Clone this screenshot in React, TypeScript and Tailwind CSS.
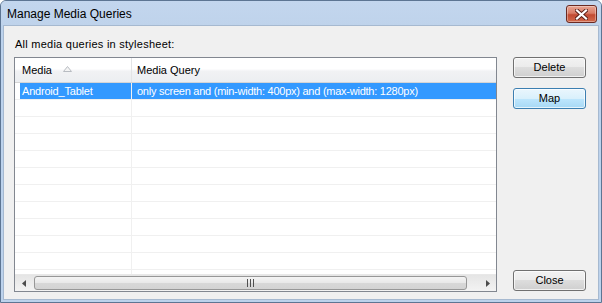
import { ReactNode } from "react";

const font = { fontFamily: '"Liberation Sans", Arial, sans-serif' };

function WinButton({ children, focused }: { children: ReactNode; focused?: boolean }) {
	const face = focused
		? "border-[#3c7fb1] bg-[linear-gradient(#eaf6fd_0%,#d9f0fc_50%,#bee6fd_50%,#a7d9f5_100%)]"
		: "border-[#707070] bg-[linear-gradient(#f2f2f2_0%,#ebebeb_50%,#dddddd_50%,#cfcfcf_100%)]";
	return (
		<div
			className={`h-[21px] w-[73px] rounded-[3px] border ${face} flex items-center justify-center text-[11px] text-black shadow-[inset_0_0_0_1px_rgba(255,255,255,0.7)]`}
		>
			{children}
		</div>
	);
}

function CloseX() {
	return (
		<div className="mt-[4px] h-[18px] w-[31px] rounded-[3px] border border-[#6b2a22] bg-[linear-gradient(#e8a493_0%,#d97c66_45%,#c24a32_55%,#d26a4c_100%)] flex items-center justify-center shadow-[inset_0_0_0_1px_rgba(255,255,255,0.35)]">
			<svg width="13" height="11" viewBox="0 0 13 11">
				<path d="M2 1.5 L11 9.5 M11 1.5 L2 9.5" stroke="#5a2018" strokeWidth="4" strokeLinecap="square" />
				<path d="M2 1.5 L11 9.5 M11 1.5 L2 9.5" stroke="#ffffff" strokeWidth="2.2" strokeLinecap="square" />
			</svg>
		</div>
	);
}

function Row({ selected, media, query }: { selected?: boolean; media?: string; query?: string }) {
	return (
		<div className="flex h-[17px] shrink-0 border-b border-[#f0f0f0]">
			<div className="w-[117px] shrink-0 border-r border-[#f0f0f0] pl-[5px]">
				{selected && (
					<div className="h-full bg-[#3399ff] pl-[2px] text-white leading-[16px] tracking-[-0.2px]">{media}</div>
				)}
			</div>
			<div className="flex-1">
				{selected && (
					<div className="h-full bg-[#3399ff] pl-[5px] text-white leading-[16px] tracking-[-0.25px]">{query}</div>
				)}
			</div>
		</div>
	);
}

function ScrollArrow({ dir }: { dir: "left" | "right" }) {
	return (
		<div className="w-[17px] h-full flex items-center justify-center">
			<svg width="4" height="7" viewBox="0 0 4 7">
				{dir === "left" ? (
					<path d="M4 0 L0 3.5 L4 7 Z" fill="#4d4d4d" />
				) : (
					<path d="M0 0 L4 3.5 L0 7 Z" fill="#4d4d4d" />
				)}
			</svg>
		</div>
	);
}

export default function App() {
	return (
		<div
			className="w-[602px] h-[303px] bg-[#bcd2ec] border border-[#5d7593] rounded-t-[6px] flex flex-col overflow-hidden"
			style={font}
		>
			{/* title bar */}
			<div className="h-[24px] shrink-0 flex items-start justify-between bg-[linear-gradient(#c3d6ee,#bfd3eb)] pl-[6px] pr-[4px]">
				<div className="text-[12px] text-black leading-[12px] pt-[7px]">Manage Media Queries</div>
				<CloseX />
			</div>

			{/* client */}
			<div className="flex-1 mx-[2px] mb-[2px] bg-[#f0f0f0] border border-[#a6b9d0] flex text-[11px] text-black">
				<div className="pl-[10px] pt-[12px] flex flex-col">
					<div className="h-[13px] leading-[13px] pl-[1px] tracking-[0.25px]">All media queries in stylesheet:</div>
					<div className="mt-[6px] w-[483px] h-[235px] border border-[#828790] bg-white flex flex-col overflow-hidden">
						{/* header */}
						<div className="h-[25px] shrink-0 flex border-b border-[#d5d5d5] bg-[linear-gradient(#ffffff_0%,#ffffff_45%,#f1f2f4_55%,#eceef1_100%)]">
							<div className="w-[117px] shrink-0 border-r border-[#e3e4e6] pl-[7px] flex items-center gap-[11px]">
								<span>Media</span>
								<svg width="9" height="6" viewBox="0 0 9 6" className="mt-[-2px]">
									<path d="M0.5 5.5 L4.5 0.5 L8.5 5.5 Z" fill="#f4f4f4" stroke="#b8bcc2" strokeWidth="1" />
								</svg>
							</div>
							<div className="flex-1 pl-[5px] flex items-center">Media Query</div>
						</div>
						{/* rows */}
						<div className="flex-1 flex flex-col overflow-hidden">
							<Row
								selected
								media="Android_Tablet"
								query="only screen and (min-width: 400px) and (max-width: 1280px)"
							/>
							{Array.from({ length: 11 }).map((_, i) => (
								<Row key={i} />
							))}
						</div>
						{/* horizontal scrollbar */}
						<div className="h-[17px] shrink-0 flex bg-[linear-gradient(#e5e5e5,#f3f3f3)] border-t border-[#e8e8e8]">
							<ScrollArrow dir="left" />
							<div className="ml-[2px] w-[433px] my-[1px] rounded-[3px] border border-[#979797] bg-[linear-gradient(#f4f4f4_0%,#e8e8e8_50%,#d8d8d8_51%,#d3d3d3_100%)] flex items-center justify-center">
								<svg width="7" height="8" viewBox="0 0 7 8">
									<path d="M0.5 0 V8 M3.5 0 V8 M6.5 0 V8" stroke="#4f4f4f" strokeWidth="1" />
								</svg>
							</div>
							<div className="flex-1" />
							<ScrollArrow dir="right" />
						</div>
					</div>
				</div>
				<div className="ml-[16px] pt-[31px] pb-[8px] flex flex-col justify-between">
					<div className="flex flex-col gap-[10px]">
						<WinButton>Delete</WinButton>
						<WinButton focused>Map</WinButton>
					</div>
					<WinButton>Close</WinButton>
				</div>
			</div>
		</div>
	);
}
